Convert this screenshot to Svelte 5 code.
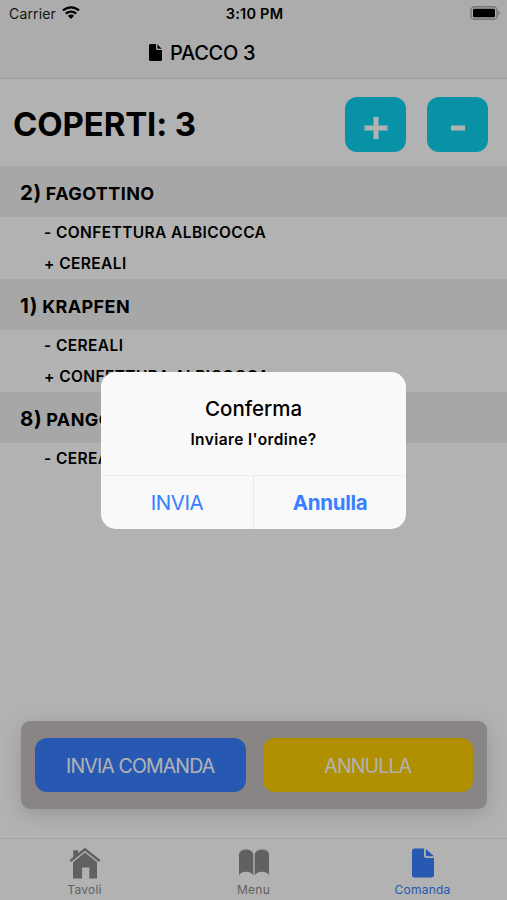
<script>
	let coperti = 3;
	let active = 'comanda';

	const ordine = [
		{ qta: 2, nome: 'FAGOTTINO', varianti: ['- CONFETTURA ALBICOCCA', '+ CEREALI'] },
		{ qta: 1, nome: 'KRAPFEN', varianti: ['- CEREALI', '+ CONFETTURA ALBICOCCA'] },
		{ qta: 8, nome: 'PANGOCCIOLI', varianti: ['- CEREALI'] }
	];

	const tabs = [
		{ key: 'tavoli', label: 'Tavoli' },
		{ key: 'menu', label: 'Menu' },
		{ key: 'comanda', label: 'Comanda' }
	];
</script>

<div class="app">
	<div class="status">
		<span class="carrier">
			Carrier
			<svg class="wifi" viewBox="0 0 18 13" width="18" height="13">
				<path d="M1 4.500a11.600 11.600 0 0 1 16 0M3.800 7.700a7.500 7.500 0 0 1 10.400 0" fill="none" stroke="#000" stroke-width="2.300" />
				<path d="M5.900 9.800a4.600 4.600 0 0 1 6.200 0L9 13z" />
			</svg>
		</span>
		<span class="time">3:10 PM</span>
		<svg class="battery" viewBox="0 0 30 14" width="30" height="14">
			<rect x="1" y=".7" width="26" height="12.6" rx="3.6" fill="none" stroke="#a8a8a8" stroke-width="1.4" />
			<rect x="3" y="2.7" width="22" height="8.6" rx="1.4" />
			<path d="M28.200 4.600c2.200.8 2.200 4 0 4.800z" fill="#a8a8a8" />
		</svg>
	</div>

	<header>
		<svg viewBox="0 0 13 17" width="13" height="17">
			<path d="M1.500 0H7v4.500A1.500 1.500 0 0 0 8.500 6H13v9.500a1.500 1.500 0 0 1-1.500 1.500h-10A1.500 1.500 0 0 1 0 15.500v-14A1.500 1.500 0 0 1 1.500 0zM8.300.3l4.400 4.400H9a.7.7 0 0 1-.7-.7z" />
		</svg>
		<h1>PACCO 3</h1>
	</header>

	<div class="coperti">
		<h2>COPERTI: {coperti}</h2>
		<button class="count" on:click={() => coperti++} aria-label="+">
			<svg viewBox="0 0 24 24" width="24" height="24"><path d="M12 1v22M.5 12h23" /></svg>
		</button>
		<button class="count" on:click={() => coperti--} aria-label="-">
			<svg viewBox="0 0 24 24" width="24" height="24"><path d="M5 12h14" /></svg>
		</button>
	</div>

	<main>
		{#each ordine as riga}
			<div class="riga">
				<span class="qta">{riga.qta})</span>
				<span class="nome">{riga.nome}</span>
			</div>
			<div class="varianti">
				{#each riga.varianti as v}
					<div class="variante">{v}</div>
				{/each}
			</div>
		{/each}
	</main>

	<div class="azioni">
		<button class="azione invia">INVIA COMANDA</button>
		<button class="azione annulla">ANNULLA</button>
	</div>

	<nav>
		{#each tabs as tab}
			<button class="tab" class:active={active === tab.key} on:click={() => { active = tab.key; }}>
				{#if tab.key === 'tavoli'}
					<svg viewBox="0 0 32 32" width="32" height="32">
						<path d="M4.200 3.200h5v5l-5 4z" />
						<path d="M1.300 14L16 2.200 30.700 14" fill="none" stroke="currentColor" stroke-width="2.400" />
						<path d="M16 5.500L28 15.200V31.500H20.300V20.500h-7.200V31.500H4V15.200z" />
					</svg>
				{:else if tab.key === 'menu'}
					<svg viewBox="0 0 32 32" width="32" height="32">
						<path d="M1 7Q2 2.500 8 2.500T15.300 7V28.500Q13.500 24.800 8 24.800T1 28.500zM31 7q-1-4.500-7-4.500T16.700 7V28.500Q18.500 24.800 24 24.800T31 28.500z" />
					</svg>
				{:else}
					<svg viewBox="0 0 32 32" width="32" height="32">
						<path d="M7.500 1.500H17v7a2.500 2.500 0 0 0 2.500 2.500H27v17a2.500 2.500 0 0 1-2.500 2.500h-17A2.500 2.500 0 0 1 5 28V4a2.500 2.500 0 0 1 2.500-2.500zM18.800 1.700L27 9.200h-7.200a1 1 0 0 1-1-1z" />
					</svg>
				{/if}
				<span>{tab.label}</span>
			</button>
		{/each}
	</nav>

	<div class="backdrop">
		<div class="alert" role="alertdialog">
			<div class="testo">
				<h3>Conferma</h3>
				<p>Inviare l'ordine?</p>
			</div>
			<div class="scelte">
				<button>INVIA</button>
				<button class="bold">Annulla</button>
			</div>
		</div>
	</div>
</div>

<style>
	:global(body) {
		margin: 0;
	}

	.app {
		width: 100%;
		height: 900px;
		display: flex;
		flex-direction: column;
		position: relative;
		overflow: hidden;
		background: #fff;
		color: #000;
		font-family: Inter, "Liberation Sans", sans-serif;
	}

	button {
		border: 0;
		padding: 0;
		margin: 0;
		background: none;
		font-family: inherit;
		cursor: pointer;
	}

	h1, h2, h3, p {
		margin: 0;
	}

	.status {
		height: 27px;
		flex: none;
		display: grid;
		grid-template-columns: 1fr auto 1fr;
		align-items: center;
		padding: 0 7px 0 9px;
		background: #f6f6f6;
		font-size: 14px;
	}

	.carrier {
		display: flex;
		align-items: center;
		gap: 6px;
		color: #222;
		letter-spacing: .15px;
	}

	.wifi {
		margin-top: -2px;
	}

	.time {
		font-size: 14.500px;
		font-weight: 600;
		letter-spacing: .25px;
	}

	.battery {
		justify-self: end;
		margin-top: -1px;
	}

	header {
		height: 51px;
		flex: none;
		display: flex;
		align-items: center;
		padding-left: 149px;
		gap: 8px;
		background: #f6f6f6;
		border-bottom: 1px solid #e2e3e5;
	}

	h1 {
		font-size: 20px;
		font-weight: 500;
		letter-spacing: -.3px;
	}

	.coperti {
		height: 87px;
		flex: none;
		display: flex;
		align-items: center;
		padding: 4px 19px 0 13px;
		box-sizing: border-box;
	}

	h2 {
		flex: 1;
		font-size: 33px;
		font-weight: 700;
		letter-spacing: -.15px;
		padding-bottom: 2px;
	}

	.count {
		width: 61px;
		height: 55px;
		margin-left: 21px;
		border-radius: 12px;
		background: #0ed2ec;
		display: flex;
		align-items: center;
		justify-content: center;
		padding-top: 6px;
	}

	.count svg {
		fill: none;
		stroke: #fff;
		stroke-width: 5;
	}

	main {
		flex: 1;
	}

	.riga {
		height: 51px;
		display: flex;
		align-items: baseline;
		gap: 4px;
		padding-left: 20px;
		line-height: 54px;
		background: #f0f0f0;
		font-weight: 700;
		overflow: hidden;
	}

	.qta {
		font-size: 20.500px;
		letter-spacing: .6px;
	}

	.nome {
		font-size: 18px;
		letter-spacing: .4px;
	}

	.varianti {
		padding: 1px 0 0 44px;
	}

	.variante {
		height: 30.500px;
		line-height: 30px;
		font-size: 15.500px;
		font-weight: 600;
		letter-spacing: .4px;
	}

	.azioni {
		height: 88px;
		flex: none;
		margin: 0 20px 29px 21px;
		padding: 0 14px;
		box-sizing: border-box;
		display: flex;
		align-items: center;
		gap: 17px;
		border-radius: 9px;
		background: #c4bfbf;
		box-shadow: 0 5px 20px rgba(0, 0, 0, .16);
	}

	.azione {
		flex: 1;
		height: 54px;
		padding-top: 1px;
		border-radius: 12px;
		color: #fff;
		font-size: 19.500px;
		letter-spacing: -.85px;
	}

	.invia {
		background: #3880ff;
	}

	.annulla {
		background: #fccd00;
	}

	nav {
		height: 62px;
		flex: none;
		box-sizing: border-box;
		display: flex;
		border-top: 1px solid #eaeaea;
	}

	.tab {
		flex: 1;
		display: flex;
		flex-direction: column;
		align-items: center;
		padding-top: 8px;
		color: #8c8c8c;
		font-size: 12px;
		line-height: 17px;
		letter-spacing: .25px;
	}

	.tab svg {
		fill: currentColor;
	}

	.tab span {
		margin-top: 2px;
	}

	.tab.active {
		color: #3880ff;
	}

	/* confirm dialog */
	.backdrop {
		position: absolute;
		inset: 0;
		display: flex;
		align-items: center;
		justify-content: center;
		background: rgba(0, 0, 0, .3);
	}

	.alert {
		width: 305px;
		height: 157px;
		display: flex;
		flex-direction: column;
		border-radius: 15px;
		background: #f9f9f9;
		overflow: hidden;
	}

	.testo {
		flex: 1;
		padding-top: 24px;
		text-align: center;
	}

	h3 {
		font-size: 20.500px;
		line-height: 26px;
		font-weight: 500;
	}

	p {
		margin-top: 8px;
		font-size: 15.500px;
		line-height: 20px;
		font-weight: 600;
		letter-spacing: .4px;
	}

	.scelte {
		height: 53px;
		display: flex;
		border-top: 1px solid #eee;
	}

	.scelte button {
		flex: 1;
		color: #3880ff;
		font-size: 20.500px;
		letter-spacing: -.4px;
	}

	.scelte .bold {
		font-weight: 700;
		border-left: 1px solid #e8e8e8;
		letter-spacing: -.3px;
	}
</style>
